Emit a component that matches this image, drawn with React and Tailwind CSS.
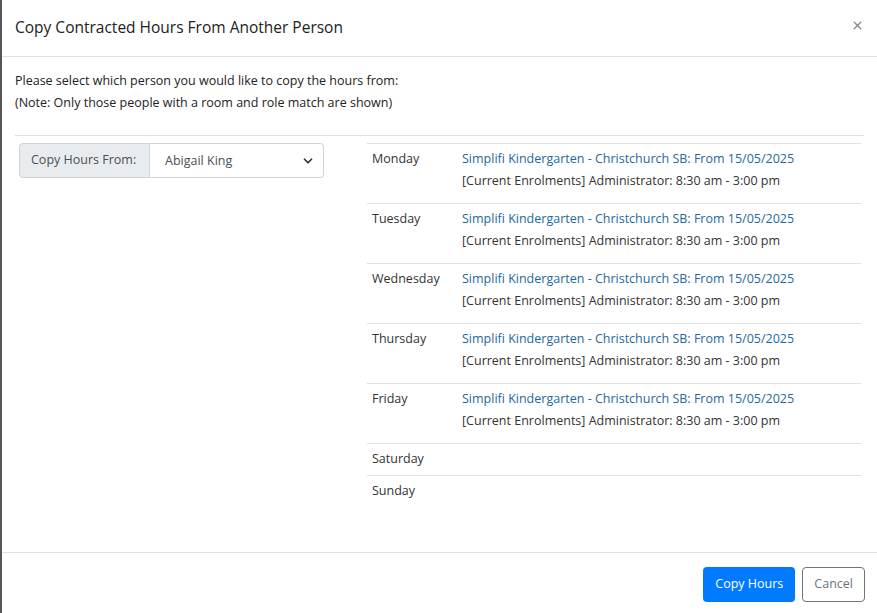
import { ChevronDown, X } from "lucide-react";

const days = [
  { name: "Monday", hours: true },
  { name: "Tuesday", hours: true },
  { name: "Wednesday", hours: true },
  { name: "Thursday", hours: true },
  { name: "Friday", hours: true },
  { name: "Saturday", hours: false },
  { name: "Sunday", hours: false },
];

export default function App() {
  return (
    <div
      className="w-[877px] h-[613px] bg-white text-[#333] flex flex-col border-l-2 border-[#555] overflow-hidden"
      style={{ fontFamily: '"Open Sans", "Noto Sans", sans-serif' }}
    >
      {/* HEADER */}
      <div className="h-[57px] flex items-center justify-between pl-[13px] pr-[13px] border-b border-[#dee2e6] shrink-0">
        <h1 className="text-[15.5px] leading-none text-[#222] pb-[1px]">
          Copy Contracted Hours From Another Person
        </h1>
        <X size={13} strokeWidth={2.5} className="text-[#888] mb-[6px]" />
      </div>

      {/* BODY */}
      <div className="flex-1 px-[13px] pt-[13px]">
        <p className="text-[12.5px] leading-[22px] text-[#222]">
          Please select which person you would like to copy the hours from:
          <br />
          (Note: Only those people with a room and role match are shown)
        </p>

        <div className="border-t border-[#dee2e6] mt-[21px] pt-[7px] flex">
          {/* LEFT */}
          <div className="w-[352px] pl-[4px]">
            <div className="flex w-[305px] h-[35px] text-[12.5px]">
              <div className="w-[131px] bg-[#e9ecef] border border-[#ced4da] rounded-l-[4px] flex items-center pl-[11px] text-[#495057]">
                Copy Hours From:
              </div>
              <div className="flex-1 border border-l-0 border-[#ced4da] rounded-r-[4px] flex items-center justify-between pl-[15px] pr-[8px] text-[#495057]">
                <span className="pt-[1px]">Abigail King</span>
                <ChevronDown size={14} strokeWidth={3} className="text-[#333]" />
              </div>
            </div>
          </div>

          {/* RIGHT */}
          <div className="w-[494px] border-t border-[#dee2e6]">
            {days.map((d) => (
              <div
                key={d.name}
                className={`flex border-b border-[#dee2e6] last:border-b-0 px-[5px] text-[12.5px] ${
                  d.hours ? "h-[60px] pt-[4px]" : "h-[32px] pt-[4px]"
                }`}
              >
                <div className="w-[90px] leading-[22px]">{d.name}</div>
                {d.hours && (
                  <div className="leading-[22px]">
                    <div className="text-[#2468a0]">
                      Simplifi Kindergarten - Christchurch SB: From 15/05/2025
                    </div>
                    <div>[Current Enrolments] Administrator: 8:30 am - 3:00 pm</div>
                  </div>
                )}
              </div>
            ))}
          </div>
        </div>
      </div>

      {/* FOOTER */}
      <div className="h-[61px] border-t border-[#dee2e6] flex items-center justify-end gap-[7px] pr-[12px] shrink-0">
        <button className="h-[35px] px-[12px] bg-[#007bff] text-white text-[12.5px] rounded-[4px] mt-[2px]">
          Copy Hours
        </button>
        <button className="h-[35px] px-[11px] bg-white text-[#6c757d] border border-[#6c757d] text-[12.5px] rounded-[4px] mt-[2px]">
          Cancel
        </button>
      </div>
    </div>
  );
}
